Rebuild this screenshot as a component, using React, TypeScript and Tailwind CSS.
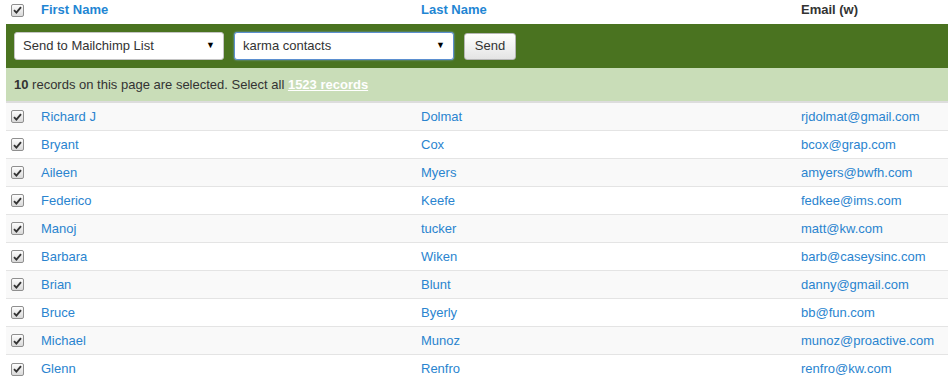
import React from 'react';

interface Contact {
  first: string;
  last: string;
  email: string;
}

const contacts: Contact[] = [
  { first: 'Richard J', last: 'Dolmat', email: 'rjdolmat@gmail.com' },
  { first: 'Bryant', last: 'Cox', email: 'bcox@grap.com' },
  { first: 'Aileen', last: 'Myers', email: 'amyers@bwfh.com' },
  { first: 'Federico', last: 'Keefe', email: 'fedkee@ims.com' },
  { first: 'Manoj', last: 'tucker', email: 'matt@kw.com' },
  { first: 'Barbara', last: 'Wiken', email: 'barb@caseysinc.com' },
  { first: 'Brian', last: 'Blunt', email: 'danny@gmail.com' },
  { first: 'Bruce', last: 'Byerly', email: 'bb@fun.com' },
  { first: 'Michael', last: 'Munoz', email: 'munoz@proactive.com' },
  { first: 'Glenn', last: 'Renfro', email: 'renfro@kw.com' },
];

function Checkbox() {
  return (
    <span className="flex h-[13px] w-[13px] items-center justify-center rounded-[2px] border border-[#8f8f8f] bg-gradient-to-b from-[#fdfdfd] to-[#d9d9d9]">
      <svg width="9" height="8" viewBox="0 0 9 8">
        <path d="M1 4.2 L3.4 6.6 L8 1.2" fill="none" stroke="#333" strokeWidth="1.9" />
      </svg>
    </span>
  );
}

function FakeSelect({ label, width, focused }: { label: string; width: string; focused?: boolean }) {
  return (
    <div
      className={`flex h-[28px] items-center justify-between rounded-[3px] bg-white pl-[8px] pr-[8px] text-[13px] text-[#333] ${width} ${
        focused ? 'border border-[#5b8fd0] shadow-[0_0_2px_#7aa7e0]' : 'border border-[#c4c4c4]'
      }`}
    >
      <span>{label}</span>
      <span className="text-[9px] text-black">▼</span>
    </div>
  );
}

export default function App() {
  return (
    <div className="min-h-[390px] bg-white pl-[6px] text-[13px] text-[#333]" style={{ fontFamily: '"Liberation Sans", Arial, sans-serif' }}>
      {/* header */}
      <div className="grid h-[24px] grid-cols-[35px_380px_380px_1fr] items-center pb-[4px] font-bold">
        <div className="pl-[5px]">
          <Checkbox />
        </div>
        <div className="text-[#1f86d3]">First Name</div>
        <div className="text-[#1f86d3]">Last Name</div>
        <div className="text-[#333]">Email (w)</div>
      </div>

      {/* bulk action bar */}
      <div className="flex h-[44px] items-center gap-[10px] bg-[#4a7320] px-[8px]">
        <FakeSelect label="Send to Mailchimp List" width="w-[210px]" />
        <FakeSelect label="karma contacts" width="w-[220px]" focused />
        <button className="h-[27px] w-[52px] rounded-[3px] border border-[#b5b5b5] bg-gradient-to-b from-white to-[#e4e4e4] text-[13px] text-[#333]">
          Send
        </button>
      </div>

      {/* selection notice */}
      <div className="flex h-[33px] items-center bg-[#c9ddb8] px-[8px] text-[#333]">
        <span className="font-bold">10</span>
        <span>&nbsp;records on this page are selected. Select all&nbsp;</span>
        <a href="#" className="font-bold text-white underline">1523 records</a>
      </div>

      {/* rows */}
      <div className="border-t-2 border-[#ddd]">
        {contacts.map((c, i) => (
          <div
            key={c.email}
            className={`grid h-[28px] grid-cols-[35px_380px_380px_1fr] items-center border-b border-[#e4e4e4] ${
              i % 2 === 0 ? 'bg-[#f9f9f9]' : 'bg-white'
            } ${i === contacts.length - 1 ? 'border-b-0' : ''}`}
          >
            <div className="pl-[5px]">
              <Checkbox />
            </div>
            <a href="#" className="text-[#2a84cf]">{c.first}</a>
            <a href="#" className="text-[#2a84cf]">{c.last}</a>
            <a href="#" className="text-[#2a84cf]">{c.email}</a>
          </div>
        ))}
      </div>
    </div>
  );
}
